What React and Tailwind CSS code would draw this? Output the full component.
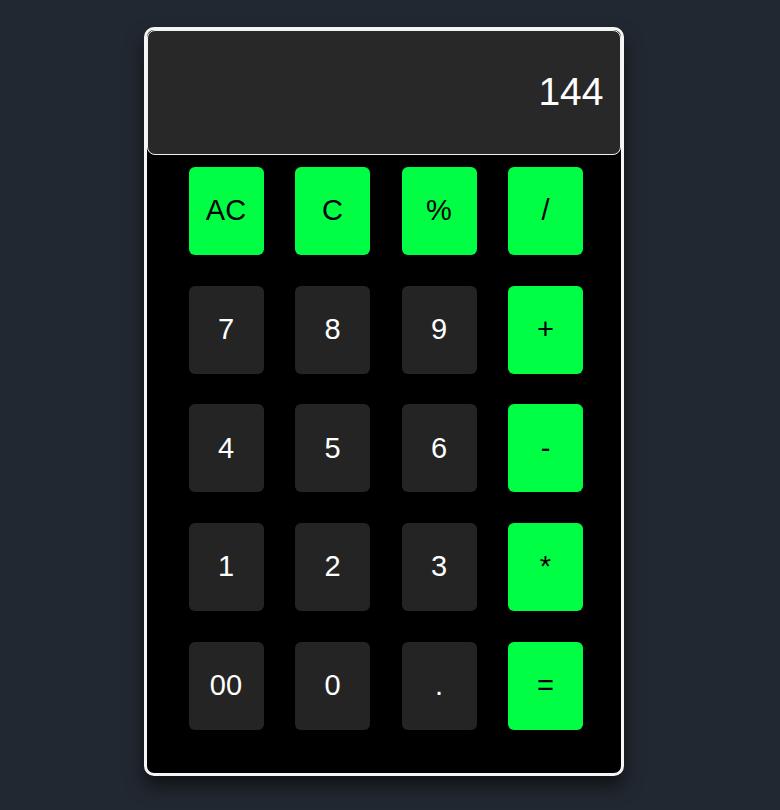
const keys = [
  ["AC", "op"], ["C", "op"], ["%", "op"], ["/", "op"],
  ["7", "num"], ["8", "num"], ["9", "num"], ["+", "op"],
  ["4", "num"], ["5", "num"], ["6", "num"], ["-", "op"],
  ["1", "num"], ["2", "num"], ["3", "num"], ["*", "op"],
  ["00", "num"], ["0", "num"], [".", "num"], ["=", "op"],
];

export default function App() {
  return (
    <div className="min-h-screen bg-[#222831] flex justify-center pt-[27px] pr-[13px] font-['Liberation_Sans',Arial,sans-serif]">
      <div className="w-[480px] h-[749px] border-[3px] border-[#f5f5f5] rounded-[10px] bg-black shadow-[0_10px_18px_rgba(0,0,0,0.55)] flex flex-col">
        {/* Display */}
        <div className="h-[125px] bg-[#282828] border border-[#f0f0f0] rounded-lg flex items-center justify-end pr-[16px] text-white text-[39px]">
          144
        </div>

        {/* Keys */}
        <div className="grid grid-cols-[repeat(4,75px)] gap-x-[31.5px] gap-y-[30.7px] pl-[42px] pt-[12px]">
          {keys.map(([label, kind]) => (
            <button
              key={label}
              className={
                kind === "op"
                  ? "h-[88px] rounded-md bg-[#00ff44] text-black text-[29px] flex items-center justify-center"
                  : "h-[88px] rounded-md bg-[#242424] text-white text-[29px] flex items-center justify-center"
              }
            >
              {label}
            </button>
          ))}
        </div>
      </div>
    </div>
  );
}
